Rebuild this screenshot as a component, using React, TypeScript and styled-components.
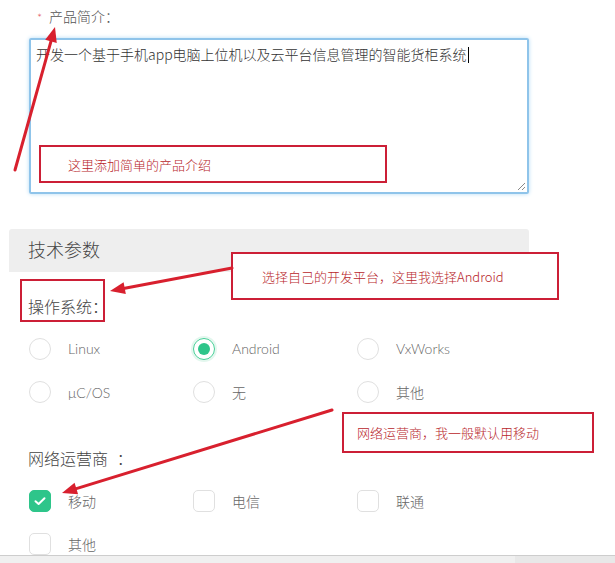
import React from "react";
import styled, { createGlobalStyle } from "styled-components";

const GlobalStyle = createGlobalStyle`
  html, body {
    margin: 0;
    padding: 0;
    background: #ffffff;
  }
  body {
    font-family: Lato, "Noto Sans CJK SC", sans-serif;
    font-weight: 300;
    overflow: hidden;
  }
`;

const osOptions = [
  { label: "Linux", checked: false },
  { label: "Android", checked: true },
  { label: "VxWorks", checked: false },
  { label: "μC/OS", checked: false },
  { label: "无", checked: false },
  { label: "其他", checked: false },
];

const carrierOptions = [
  { label: "移动", checked: true },
  { label: "电信", checked: false },
  { label: "联通", checked: false },
  { label: "其他", checked: false },
];

const notes = [
  { text: "这里添加简单的产品介绍", left: 39, top: 145, width: 348, height: 38, pad: 27 },
  { text: "选择自己的开发平台，这里我选择Android", left: 231, top: 252, width: 328, height: 48, pad: 29 },
  { text: "网络运营商，我一般默认用移动", left: 342, top: 412, width: 252, height: 41, pad: 13 },
];

// arrows drawn on the screenshot: tail -> head
const arrows = [
  { x1: 15, y1: 170, x2: 55, y2: 27 },
  { x1: 232, y1: 268, x2: 110, y2: 291 },
  { x1: 332, y1: 410, x2: 62, y2: 493 },
];

function Arrow({ x1, y1, x2, y2 }: { x1: number; y1: number; x2: number; y2: number }) {
  const a = Math.atan2(y2 - y1, x2 - x1);
  const len = 15;
  const half = 6;
  const bx = x2 - len * Math.cos(a);
  const by = y2 - len * Math.sin(a);
  const px = -Math.sin(a) * half;
  const py = Math.cos(a) * half;
  return (
    <g>
      <line x1={x1} y1={y1} x2={bx} y2={by} stroke="#d8202e" strokeWidth={3} strokeLinecap="round" />
      <polygon
        points={`${x2},${y2} ${bx + px},${by + py} ${bx - px},${by - py}`}
        fill="#d8202e"
      />
    </g>
  );
}

function App() {
  return (
    <Page>
      <GlobalStyle />

      <FieldLabel>
        <Required>*</Required>产品简介：
      </FieldLabel>
      <IntroBox>
        开发一个基于手机app电脑上位机以及云平台信息管理的智能货柜系统
        <Caret />
        <Grip width="10" height="10" viewBox="0 0 10 10">
          <path d="M9 2 L2 9 M9 6 L6 9" stroke="#888" strokeWidth="1" />
        </Grip>
      </IntroBox>

      <SectionHeader>技术参数</SectionHeader>

      <GroupLabel>操作系统：</GroupLabel>
      <OptionGrid>
        {osOptions.map((o) => (
          <Option key={o.label}>
            <Radio $checked={o.checked} />
            <OptionText>{o.label}</OptionText>
          </Option>
        ))}
      </OptionGrid>

      <GroupLabel $gap={35}>网络运营商&nbsp;&nbsp;：</GroupLabel>
      <OptionGrid>
        {carrierOptions.map((o, i) => (
          <Option key={o.label + i}>
            <Check $checked={o.checked}>
              {o.checked && (
                <svg width="14" height="14" viewBox="0 0 14 14">
                  <path d="M2.5 7.2 L5.6 10 L11.5 4.2" fill="none" stroke="#fff" strokeWidth="2" strokeLinecap="round" strokeLinejoin="round" />
                </svg>
              )}
            </Check>
            <OptionText>{o.label}</OptionText>
          </Option>
        ))}
      </OptionGrid>

      <OsLabelMark />
      {notes.map((n) => (
        <Note key={n.text} style={{ left: n.left, top: n.top, width: n.width, height: n.height, paddingLeft: n.pad }}>
          {n.text}
        </Note>
      ))}
      <ArrowLayer width="615" height="563">
        {arrows.map((a, i) => (
          <Arrow key={i} {...a} />
        ))}
      </ArrowLayer>

      <BottomBar>
        <BarTrack />
      </BottomBar>
    </Page>
  );
}

export default App;

const Page = styled.div`
  position: relative;
  width: 615px;
  height: 563px;
  overflow: hidden;
  padding-top: 7px;
  box-sizing: border-box;
`;

const FieldLabel = styled.div`
  height: 20px;
  line-height: 20px;
  padding-left: 37px;
  font-size: 14px;
  color: #555;
`;

const Required = styled.span`
  color: #e0454f;
  font-size: 12px;
  margin-right: 7px;
`;

const IntroBox = styled.div`
  position: relative;
  box-sizing: border-box;
  margin: 11px 0 0 29px;
  width: 500px;
  height: 156px;
  padding: 4px 5px;
  border: 2px solid #8fc4ea;
  border-radius: 2px;
  box-shadow: 0 0 4px #b5dcf6;
  font-family: "Noto Sans CJK SC", Lato, sans-serif;
  font-size: 14px;
  line-height: 20px;
  color: #333;
`;

const Caret = styled.span`
  display: inline-block;
  width: 1px;
  height: 16px;
  margin-left: 1px;
  vertical-align: -3px;
  background: #000;
`;

const Grip = styled.svg`
  position: absolute;
  right: 1px;
  bottom: 1px;
`;

const SectionHeader = styled.div`
  margin: 35px 0 0 9px;
  width: 520px;
  height: 43px;
  box-sizing: border-box;
  padding-left: 19px;
  line-height: 43px;
  background: #eeeeee;
  border-radius: 3px 3px 0 0;
  font-size: 18px;
  color: #444;
`;

const GroupLabel = styled.div<{ $gap?: number }>`
  margin: ${(p) => p.$gap ?? 25}px 0 0 28px;
  height: 20px;
  line-height: 20px;
  font-size: 16px;
  color: #444;
`;

const OptionGrid = styled.div`
  display: grid;
  grid-template-columns: repeat(3, 164px);
  grid-auto-rows: 43.5px;
  margin: 10px 0 0 29px;
`;

const Option = styled.div`
  display: flex;
  align-items: center;
  gap: 17px;
`;

const OptionText = styled.span`
  font-size: 14px;
  color: #666;
`;

const Radio = styled.span<{ $checked: boolean }>`
  position: relative;
  width: 22px;
  height: 22px;
  box-sizing: border-box;
  border-radius: 50%;
  border: 1px solid ${(p) => (p.$checked ? "#45cf96" : "#e0e0e0")};
  box-shadow: ${(p) => (p.$checked ? "0 0 0 2px #e3f7ee" : "none")};
  &::after {
    content: "";
    display: ${(p) => (p.$checked ? "block" : "none")};
    position: absolute;
    left: 4px;
    top: 4px;
    width: 12px;
    height: 12px;
    border-radius: 50%;
    background: #2ec58a;
  }
`;

const Check = styled.span<{ $checked: boolean }>`
  display: flex;
  align-items: center;
  justify-content: center;
  width: 22px;
  height: 22px;
  box-sizing: border-box;
  border-radius: 5px;
  border: 1px solid ${(p) => (p.$checked ? "#2ec58a" : "#e0e0e0")};
  background: ${(p) => (p.$checked ? "#2ec58a" : "#fff")};
`;

const OsLabelMark = styled.div`
  position: absolute;
  left: 20px;
  top: 279px;
  width: 85px;
  height: 43px;
  box-sizing: border-box;
  border: 2px solid #cc1f36;
`;

const Note = styled.div`
  position: absolute;
  box-sizing: border-box;
  display: flex;
  align-items: center;
  border: 2px solid #cc1f36;
  background: #fff;
  font-family: "Noto Sans CJK SC", Lato, sans-serif;
  font-size: 13px;
  color: #b8262b;
`;

const ArrowLayer = styled.svg`
  position: absolute;
  left: 0;
  top: 0;
  pointer-events: none;
`;

const BottomBar = styled.div`
  position: absolute;
  left: 0;
  right: 0;
  bottom: 0;
  height: 7px;
  border-top: 1px solid #cdcdcd;
  background: #f0f0f0;
  display: flex;
  justify-content: flex-end;
`;

const BarTrack = styled.div`
  width: 100px;
  background: #e8e8e8;
`;
